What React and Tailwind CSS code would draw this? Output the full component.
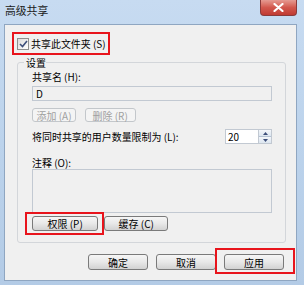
import React from 'react';

const font = "font-['Noto_Sans_CJK_SC','Noto_Sans',sans-serif]";

// small label text: drawn at 12px and shrunk, the browser will not go below 12px
const T = ({ children, className = 'origin-left' }) => (
    <span className={`inline-block whitespace-pre text-[12px] leading-[13px] scale-[0.83] ${className}`}>
        {children}
    </span>
);

// Win7 style push button
const Button = ({ children, disabled, className = '' }) => (
    <div
        className={`flex items-center justify-center rounded-[3px] border ${
            disabled
                ? 'border-[#c3c7cb] bg-[#f4f4f4] text-[#a0a0a0]'
                : 'border-[#7a7a7a] bg-gradient-to-b from-[#f6f6f6] via-[#e8e8e8] to-[#d2d2d2] text-black'
        } ${className}`}
    >
        <T className="origin-center">{children}</T>
    </div>
);

const RedMark = ({ className }) => (
    <div className={`absolute border-2 border-[#e8141c] pointer-events-none ${className}`} />
);

export default function App() {
    return (
        <div className={`w-[304px] h-[285px] flex flex-col overflow-hidden bg-gradient-to-b from-[#c7dbf1] via-[#bcd3ec] to-[#b3cbe6] text-black text-[12px] leading-[13px] ${font}`}>
            {/* Title bar */}
            <div className="h-[24px] flex items-start justify-between shrink-0">
                <span className="ml-[5px] mt-[3px] inline-block whitespace-pre text-[12px] leading-[14px] text-[#1a1a1a] scale-[0.9] origin-left">高级共享</span>
                <div className="mr-[7px] w-[37px] h-[16px] rounded-b-[4px] border border-t-0 border-[#8a3a3a] bg-gradient-to-b from-[#e59a92] via-[#d2574d] to-[#c03a32] flex items-center justify-center">
                    <svg width="11" height="9" viewBox="0 0 11 9">
                        <path d="M1.5 1 L9.5 8 M9.5 1 L1.5 8" stroke="#ffffff" strokeWidth="2.2" strokeLinecap="round" />
                    </svg>
                </div>
            </div>

            {/* Client area */}
            <div className="ml-[4px] mr-[7px] mb-[4px] flex-1 bg-[#f0f0f0] border border-[#8fa6c1] flex flex-col">
                {/* Share checkbox */}
                <div className="relative ml-[7px] mt-[7px] w-[98px] h-[23px] flex items-center pl-[5px] gap-[2px]">
                    <RedMark className="inset-0" />
                    <div className="w-[12px] h-[12px] shrink-0 border border-[#8e8f8f] bg-gradient-to-br from-[#dcdcdc] to-[#ffffff] flex items-center justify-center">
                        <svg width="9" height="8" viewBox="0 0 9 8">
                            <path d="M1 4 L3.5 6.5 L8 1" stroke="#3c4e7a" strokeWidth="1.6" fill="none" />
                        </svg>
                    </div>
                    <T>共享此文件夹 (S)</T>
                </div>

                {/* Settings group */}
                <div className="relative ml-[12px] mt-[7px] w-[269px] h-[181px] border border-[#d3d6da] rounded-[3px] pl-[14px] pr-[13px] flex flex-col">
                    <div className="absolute -top-[7px] left-[6px] w-[22px] h-[13px] bg-[#f0f0f0] pl-[2px] flex items-center">
                        <T>设置</T>
                    </div>

                    <div className="mt-[7px] h-[13px] flex items-center"><T>共享名 (H):</T></div>
                    <div className="mt-[3px] h-[15px] border border-[#c2c9d2] bg-[#f0f0f0] flex items-center pl-[3px]">
                        <T>D</T>
                    </div>

                    <div className="mt-[7px] flex gap-[9px]">
                        <Button disabled className="w-[44px] h-[14px]">添加 (A)</Button>
                        <Button disabled className="w-[51px] h-[14px]">删除 (R)</Button>
                    </div>

                    <div className="mt-[7px] h-[15px] flex items-center justify-between">
                        <T>将同时共享的用户数量限制为 (L):</T>
                        <div className="w-[47px] h-[15px] border border-[#c2c9d2] bg-white flex items-center">
                            <div className="flex-1 pl-[2px] flex items-center"><T>20</T></div>
                            <div className="w-[13px] h-full flex flex-col border-l border-[#c2c9d2]">
                                <div className="flex-1 bg-gradient-to-b from-[#f3f6fa] to-[#dde6f0] border-b border-[#b4c2d3] flex items-center justify-center">
                                    <svg width="5" height="3" viewBox="0 0 5 3"><path d="M0 3 L2.5 0 L5 3Z" fill="#3c4e7a" /></svg>
                                </div>
                                <div className="flex-1 bg-gradient-to-b from-[#f3f6fa] to-[#dde6f0] flex items-center justify-center">
                                    <svg width="5" height="3" viewBox="0 0 5 3"><path d="M0 0 L2.5 3 L5 0Z" fill="#3c4e7a" /></svg>
                                </div>
                            </div>
                        </div>
                    </div>

                    <div className="mt-[12px] h-[13px] flex items-center"><T>注释 (O):</T></div>
                    <div className="h-[44px] border border-[#c2c9d2] bg-[#f0f0f0]" />

                    <div className="mt-[3px] flex gap-[6px]">
                        <div className="relative">
                            <RedMark className="-left-[7px] -right-[6px] -top-[4px] -bottom-[4px]" />
                            <Button className="w-[66px] h-[15px]">权限 (P)</Button>
                        </div>
                        <Button className="w-[64px] h-[15px]">缓存 (C)</Button>
                    </div>
                </div>

                {/* Dialog buttons */}
                <div className="mt-[11px] flex justify-end gap-[8px] pr-[12px]">
                    <Button className="w-[60px] h-[16px]">确定</Button>
                    <Button className="w-[60px] h-[16px]">取消</Button>
                    <div className="relative">
                        <RedMark className="-left-[9px] -right-[11px] -top-[6px] -bottom-[4px]" />
                        <Button className="w-[60px] h-[16px]">应用</Button>
                    </div>
                </div>
            </div>
        </div>
    );
}
